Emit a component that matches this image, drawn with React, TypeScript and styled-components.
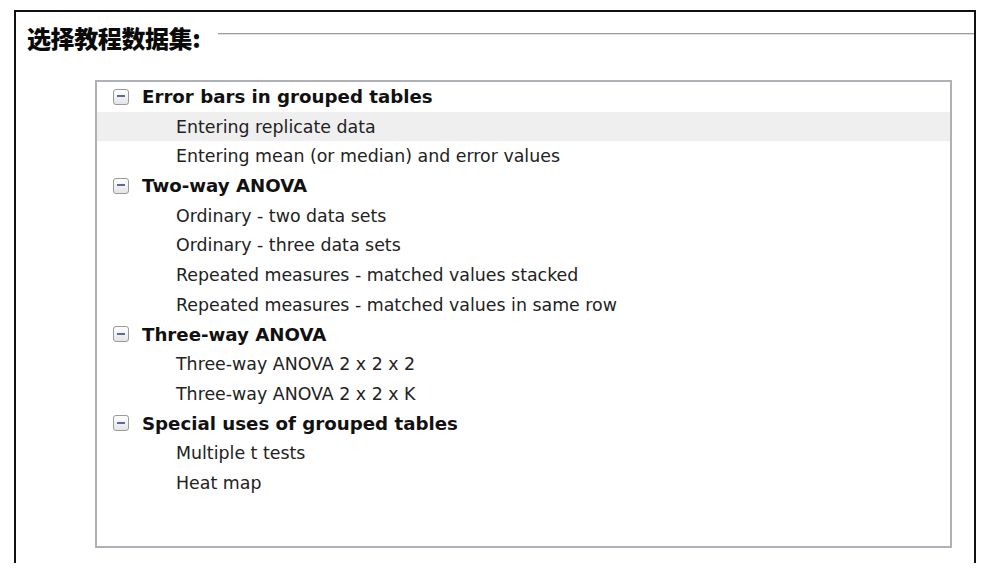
import React from 'react';
import styled, { createGlobalStyle } from 'styled-components';

type Group = {
    title: string,
    items: string[]
}

const groups: Group[] = [
    {
        title: 'Error bars in grouped tables',
        items: ['Entering replicate data', 'Entering mean (or median) and error values']
    },
    {
        title: 'Two-way ANOVA',
        items: [
            'Ordinary - two data sets',
            'Ordinary - three data sets',
            'Repeated measures - matched values stacked',
            'Repeated measures - matched values in same row'
        ]
    },
    {
        title: 'Three-way ANOVA',
        items: ['Three-way ANOVA 2 x 2 x 2', 'Three-way ANOVA 2 x 2 x K']
    },
    {
        title: 'Special uses of grouped tables',
        items: ['Multiple t tests', 'Heat map']
    }
]

const GlobalStyle = createGlobalStyle`
    html, body {
      margin: 0;
      padding: 0;
      background: #ffffff;
    }
    body {
      font-family: "DejaVu Sans", "Noto Sans CJK SC", sans-serif;
    }
`

const Frame = styled.div`
    margin: 10px 6px 0 14px;
    height: 553px;
    box-sizing: border-box;
    border: 2px solid #111;
    border-bottom: none;
`

const Header = styled.div`
    display: flex;
    align-items: flex-start;
    padding: 11px 0 0 11px;
    height: 31px;
`

const Title = styled.div`
    font-family: "Noto Sans CJK SC", "DejaVu Sans", sans-serif;
    font-weight: 900;
    font-size: 24px;
    line-height: 30px;
    color: #0a0a0a;
    letter-spacing: -0.4px;
`

const Rule = styled.div`
    flex: 1;
    margin: 10px 0 0 18px;
    height: 1px;
    background: #9d9d9d;
    border-bottom: 1px solid #e2e2e2;
`

const TreeBox = styled.div`
    margin: 26px 22px 0 79px;
    height: 468px;
    box-sizing: border-box;
    border: 2px solid #aeb1b6;
    background: #fff;
`

const Row = styled.div<{ $selected?: boolean }>`
    display: flex;
    align-items: center;
    height: 29.7px;
    background: ${p => p.$selected ? '#efefef' : 'transparent'};
`

const Toggle = styled.span`
    position: relative;
    box-sizing: border-box;
    width: 16px;
    height: 16px;
    margin: 0 13px 0 16px;
    border: 1.5px solid #9a9a9a;
    border-radius: 3px;
    background: linear-gradient(#ffffff, #e4e4e4);
    flex-shrink: 0;

    &::after {
      content: '';
      position: absolute;
      left: 3px;
      right: 3px;
      top: 5.5px;
      height: 2px;
      background: #5b6a9c;
    }
`

const GroupLabel = styled.span`
    font-weight: 700;
    font-size: 18.2px;
    color: #111;
`

const ItemLabel = styled.span`
    padding-left: 79px;
    font-size: 17.4px;
    color: #222;
`

const App: React.FC = () => {
    return (
        <>
          <GlobalStyle/>
          <Frame>
            <Header>
              <Title>选择教程数据集:</Title>
              <Rule/>
            </Header>
            <TreeBox>
              {groups.map(g => (
                <React.Fragment key={g.title}>
                  <Row>
                    <Toggle/>
                    <GroupLabel>{g.title}</GroupLabel>
                  </Row>
                  {g.items.map(item => (
                    <Row key={item} $selected={item === 'Entering replicate data'}>
                      <ItemLabel>{item}</ItemLabel>
                    </Row>
                  ))}
                </React.Fragment>
              ))}
            </TreeBox>
          </Frame>
        </>
    )
}

export default App;
